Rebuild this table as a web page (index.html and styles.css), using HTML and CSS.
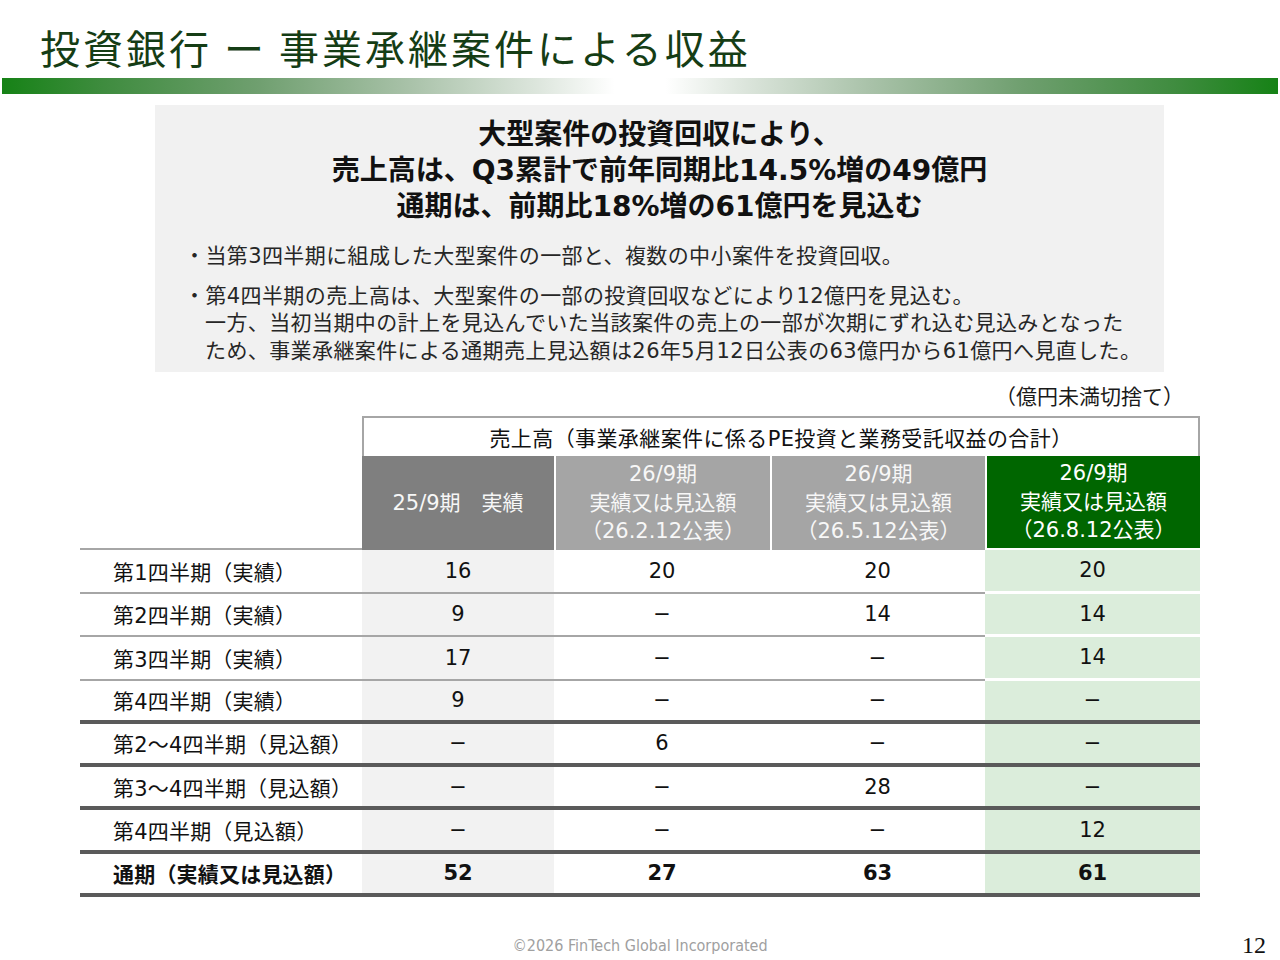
FILE: index.html
```html
<!DOCTYPE html>
<html lang="ja">
<head>
<meta charset="utf-8">
<title>投資銀行 ー 事業承継案件による収益</title>
<link rel="stylesheet" href="styles.css">
</head>
<body>
<div class="slide">
  <header class="title-block">
    <h1 class="title">投資銀行 ー 事業承継案件による収益</h1>
    <div class="title-bar"></div>
  </header>

  <section class="summary">
    <h2 class="summary-head">大型案件の投資回収により、<br>売上高は、Q3累計で前年同期比14.5%増の49億円<br>通期は、前期比18%増の61億円を見込む</h2>
    <p class="bullet">・当第3四半期に組成した大型案件の一部と、複数の中小案件を投資回収。</p>
    <p class="bullet">・第4四半期の売上高は、大型案件の一部の投資回収などにより12億円を見込む。<br>一方、当初当期中の計上を見込んでいた当該案件の売上の一部が次期にずれ込む見込みとなった<br>ため、事業承継案件による通期売上見込額は26年5月12日公表の63億円から61億円へ見直した。</p>
  </section>

  <section class="table-area">
    <div class="unit-note">（億円未満切捨て）</div>
    <table class="sales">
      <colgroup>
        <col class="c-label"><col class="c-prev"><col class="c-feb"><col class="c-may"><col class="c-aug">
      </colgroup>
      <thead>
        <tr class="head-group">
          <th class="blank"></th>
          <th class="group" colspan="4">売上高（事業承継案件に係るPE投資と業務受託収益の合計）</th>
        </tr>
        <tr class="head-cols">
          <th class="blank-under"></th>
          <th class="hd hd-prev">25/9期　実績</th>
          <th class="hd hd-grey">26/9期<br>実績又は見込額<br>（26.2.12公表）</th>
          <th class="hd hd-grey">26/9期<br>実績又は見込額<br>（26.5.12公表）</th>
          <th class="hd hd-green">26/9期<br>実績又は見込額<br>（26.8.12公表）</th>
        </tr>
      </thead>
      <tbody>
        <tr class="thin">
          <th>第1四半期（実績）</th><td class="v-prev">16</td><td>20</td><td>20</td><td class="v-aug">20</td>
        </tr>
        <tr class="thin">
          <th>第2四半期（実績）</th><td class="v-prev">9</td><td>−</td><td>14</td><td class="v-aug">14</td>
        </tr>
        <tr class="thin">
          <th>第3四半期（実績）</th><td class="v-prev">17</td><td>−</td><td>−</td><td class="v-aug">14</td>
        </tr>
        <tr class="thick">
          <th>第4四半期（実績）</th><td class="v-prev">9</td><td>−</td><td>−</td><td class="v-aug">−</td>
        </tr>
        <tr class="thick">
          <th>第2～4四半期（見込額）</th><td class="v-prev">−</td><td>6</td><td>−</td><td class="v-aug">−</td>
        </tr>
        <tr class="thick">
          <th>第3～4四半期（見込額）</th><td class="v-prev">−</td><td>−</td><td>28</td><td class="v-aug">−</td>
        </tr>
        <tr class="thick">
          <th>第4四半期（見込額）</th><td class="v-prev">−</td><td>−</td><td>−</td><td class="v-aug">12</td>
        </tr>
        <tr class="thick total">
          <th>通期（実績又は見込額）</th><td class="v-prev">52</td><td>27</td><td>63</td><td class="v-aug">61</td>
        </tr>
      </tbody>
    </table>
  </section>

  <footer class="footer">
    <span class="footer-spacer"></span>
    <span class="copyright">©2026 FinTech Global Incorporated</span>
    <span class="page-no">12</span>
  </footer>
</div>
</body>
</html>
```

FILE: styles.css
```css
html, body {
  margin: 0;
  padding: 0;
  background: #ffffff;
}

.slide {
  width: 1280px;
  height: 960px;
  overflow: hidden;
  font-family: "DejaVu Sans", "Noto Sans CJK JP", sans-serif;
  color: #1a1a1a;
}

/* ---------- title ---------- */
.title-block {
  padding-top: 22px;
}

.title {
  margin: 0;
  padding-left: 40px;
  font-family: "Noto Sans CJK JP", sans-serif;
  font-weight: 400;
  font-size: 40px;
  line-height: 50px;
  letter-spacing: 3px;
  word-spacing: 0;
  color: #153d15;
  white-space: nowrap;
}

.title-bar {
  margin: 6px 2px 0 2px;
  height: 16px;
  background: linear-gradient(90deg,
    #168216 0%,
    #3f8c3f 8%,
    #6f9f6f 20%,
    #a9c2a9 32%,
    #dde6dd 42%,
    #ffffff 48%,
    #ffffff 52%,
    #dde6dd 58%,
    #a9c2a9 68%,
    #6f9f6f 80%,
    #3f8c3f 92%,
    #168216 100%);
}

/* ---------- summary box ---------- */
.summary {
  margin: 11px 0 0 155px;
  width: 1009px;
  height: 267px;
  box-sizing: border-box;
  padding: 12px 10px 0 29px;
  background: #f1f1f1;
}

.summary-head {
  margin: 0 0 18px -19px;
  font-size: 28px;
  line-height: 36px;
  font-weight: 700;
  text-align: center;
  color: #111111;
  white-space: nowrap;
}

.bullet {
  margin: 0 0 12px 0;
  padding-left: 21px;
  text-indent: -21px;
  font-size: 21px;
  line-height: 27.5px;
  letter-spacing: 0.4px;
  color: #262626;
  white-space: nowrap;
}

/* ---------- table ---------- */
.table-area {
  margin: 11px 0 0 80px;
  width: 1120px;
}

.unit-note {
  text-align: right;
  padding-right: 16px;
  font-size: 21px;
  line-height: 28px;
  color: #1a1a1a;
}

.sales {
  margin-top: 5px;
  width: 1120px;
  table-layout: fixed;
  border-collapse: separate;
  border-spacing: 0;
  font-size: 21px;
  color: #111111;
}

.c-label { width: 282px; }
.c-prev  { width: 192px; }
.c-feb   { width: 216px; }
.c-may   { width: 215px; }
.c-aug   { width: 215px; }

.sales th, .sales td {
  padding: 0;
  font-weight: 400;
}

.head-group { height: 40px; }

.group {
  border: 2px solid #a6a6a6;
  border-bottom: none;
  font-size: 21px;
  letter-spacing: 0.4px;
  text-align: center;
  vertical-align: middle;
}

.head-cols { height: 94px; }

.blank-under {
  border-bottom: 2px solid #a6a6a6;
}

.hd {
  text-align: center;
  vertical-align: middle;
  line-height: 28.5px;
  color: #f7f7f7;
}

.hd-prev {
  background: #7f7f7f;
}

.hd-grey {
  background: #a5a5a5;
  border-left: 2px solid #ffffff;
}

.hd-green {
  background: #006600;
  border-left: 2px solid #ffffff;
  border-bottom: 2px solid #ffffff;
  color: #ffffff;
}

.sales tbody th {
  text-align: left;
  padding-left: 33px;
  vertical-align: middle;
  white-space: nowrap;
  letter-spacing: 0.2px;
}

.sales tbody td {
  text-align: center;
  vertical-align: middle;
}

.v-prev { background: #f2f2f2; }
.v-aug  { background: #dbeddb; }

.thin { height: 43.5px; }
.thin th, .thin td {
  border-bottom: 2px solid #a6a6a6;
}
.thin td.v-aug {
  border-bottom: 3px solid #ffffff;
}

.thick { height: 43.3px; }
.thick th, .thick td {
  border-bottom: 4px solid #5a5a5a;
}

.total th, .total td {
  font-weight: 700;
}

/* ---------- footer ---------- */
.footer {
  margin-top: 34px;
  height: 30px;
  display: grid;
  grid-template-columns: 1fr auto 1fr;
  align-items: center;
  padding-right: 14px;
}

.copyright {
  font-family: "Liberation Sans Narrow", "DejaVu Sans Condensed", "Liberation Sans", sans-serif;
  font-size: 16px;
  color: #a0a0a0;
  padding-left: 14px;
}

.page-no {
  justify-self: end;
  font-family: "Liberation Serif", serif;
  font-size: 24px;
  color: #111111;
}
```
